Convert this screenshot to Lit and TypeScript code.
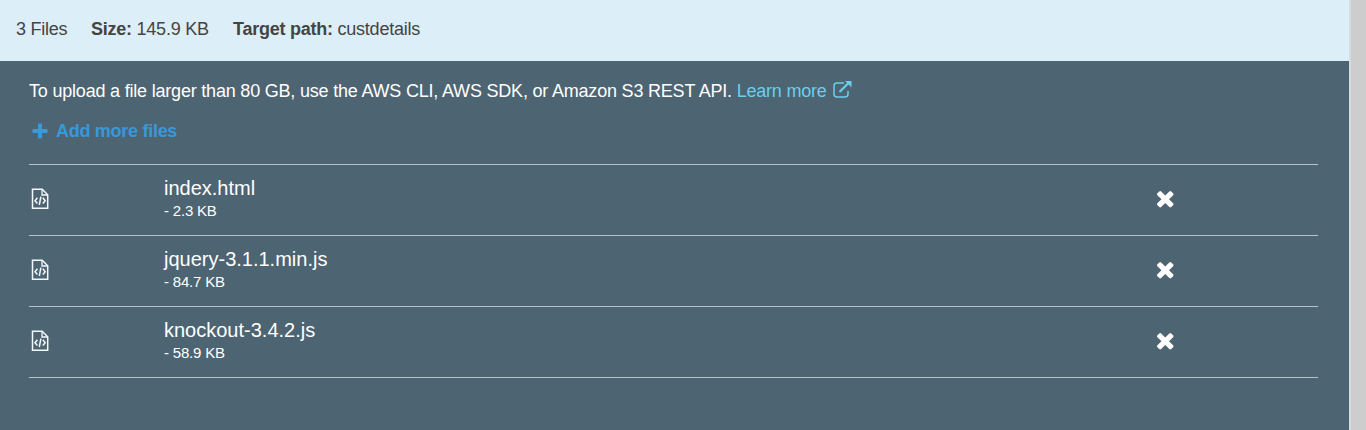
import { LitElement, html, css } from "lit";
import { customElement, property, state } from "lit/decorators.js";

interface FileEntry {
  name: string;
  size: string;
}

@customElement("file-row")
class FileRow extends LitElement {
  @property({ attribute: false }) file!: FileEntry;

  static styles = css`
    :host {
      display: grid;
      grid-template-columns: 135px 1fr 189px;
      box-sizing: border-box;
      height: 71px;
      border-bottom: 1px solid #b4c3cc;
      color: #fff;
    }
    .type {
      padding: 23px 0 0 2px;
    }
    svg {
      display: block;
    }
    .info {
      padding-top: 11px;
    }
    .name {
      font-size: 20px;
      line-height: 24px;
    }
    .size {
      font-size: 15px;
      line-height: 20px;
      letter-spacing: -0.2px;
      padding-top: 1px;
    }
    .remove {
      display: block;
      border: 0;
      background: none;
      padding: 26px 0 0 28px;
      justify-self: start;
      align-self: start;
    }
  `;

  render() {
    return html`
      <div class="type">
        <svg width="18" height="22" viewBox="0 0 18 22" fill="none" stroke="#f2f8fb">
          <path stroke-width="1.5" d="M1.5 1.2H11.2L16.7 6.7V20.3H1.5Z" />
          <path stroke-width="1.3" d="M11 1.2V7H16.7" />
          <path stroke-width="1.5" d="M6.4 9.8 4 12.7 6.4 15.6M11.8 9.8 14.2 12.7 11.8 15.6M9.9 8.6 8.3 17" />
        </svg>
      </div>
      <div class="info">
        <div class="name">${this.file.name}</div>
        <div class="size">- ${this.file.size}</div>
      </div>
      <button class="remove" aria-label="Remove">
        <svg width="16.5" height="16.5" viewBox="110 366 1188 1188" fill="#fff">
          <path d="M1298 1322q0 40-28 68l-136 136q-28 28-68 28t-68-28l-294-294-294 294q-28 28-68 28t-68-28l-136-136q-28-28-28-68t28-68l294-294-294-294q-28-28-28-68t28-68l136-136q28-28 68-28t68 28l294 294 294-294q28-28 68-28t68 28l136 136q28 28 28 68t-28 68l-294 294 294 294q28 28 28 68z" />
        </svg>
      </button>
    `;
  }
}

@customElement("app-root")
class AppRoot extends LitElement {
  @state() files: FileEntry[] = [
    { name: "index.html", size: "2.3 KB" },
    { name: "jquery-3.1.1.min.js", size: "84.7 KB" },
    { name: "knockout-3.4.2.js", size: "58.9 KB" },
  ];

  static styles = css`
    :host {
      display: grid;
      grid-template-columns: 1fr 17px;
      height: 430px;
      overflow: hidden;
      font-family: "Liberation Sans", Arial, sans-serif;
      font-size: 18px;
      background: #4d6472;
    }
    .panel {
      display: flex;
      flex-direction: column;
    }
    .summary {
      display: flex;
      box-sizing: border-box;
      height: 61px;
      padding: 18px 16px 0;
      background: #dceef8;
      color: #444;
      line-height: 22px;
      letter-spacing: -0.24px;
      white-space: nowrap;
    }
    .count {
      width: 75px;
    }
    .total {
      width: 142px;
    }
    .content {
      padding: 19px 31px 0 29px;
    }
    .hint {
      display: flex;
      line-height: 22px;
      letter-spacing: -0.2px;
      color: #fff;
      white-space: pre;
    }
    .learn {
      display: flex;
      letter-spacing: -0.22px;
      color: #69cfec;
    }
    .learn svg {
      margin-left: 6px;
    }
    .add {
      display: flex;
      align-items: center;
      height: 22px;
      margin-top: 18px;
      padding-left: 3px;
      gap: 8px;
      color: #3799db;
      font-weight: bold;
      letter-spacing: -0.28px;
    }
    .list {
      margin-top: 22px;
      border-top: 1px solid #b4c3cc;
      letter-spacing: normal;
    }
    .scrollbar {
      background: #cdcdcd;
      border-left: 2px solid #d3dde2;
    }
  `;

  render() {
    return html`
      <div class="panel">
        <div class="summary">
          <div class="count">${this.files.length} Files</div>
          <div class="total"><b>Size:</b> 145.9 KB</div>
          <div><b>Target path:</b> custdetails</div>
        </div>
        <div class="content">
          <div class="hint"><span>To upload a file larger than 80 GB, use the AWS CLI, AWS SDK, or Amazon S3 REST API. </span><a class="learn"><span>Learn more</span><svg width="19" height="19" viewBox="0 0 19 19"><path d="M11 3H4Q1 3 1 6v8q0 3 3 3h8q3 0 3-3v-3" fill="none" stroke="currentColor" stroke-width="1.5" /><path d="M6.5 12 15 3.5" stroke="currentColor" stroke-width="2.2" /><path d="M12 1h6.5v6.5Z" fill="currentColor" /></svg></a></div>
          <div class="add">
            <svg width="16" height="16" viewBox="-40 88 1488 1488" fill="currentColor">
              <path d="M1408 736v192q0 40-28 68t-68 28H896v416q0 40-28 68t-68 28H608q-40 0-68-28t-28-68v-416H96q-40 0-68-28T0 928V736q0-40 28-68t68-28h416V224q0-40 28-68t68-28h192q40 0 68 28t28 68v416h416q40 0 68 28t28 68z" />
            </svg>
            <span>Add more files</span>
          </div>
          <div class="list">${this.files.map((f) => html`<file-row .file=${f}></file-row>`)}</div>
        </div>
      </div>
      <div class="scrollbar"></div>
    `;
  }
}
